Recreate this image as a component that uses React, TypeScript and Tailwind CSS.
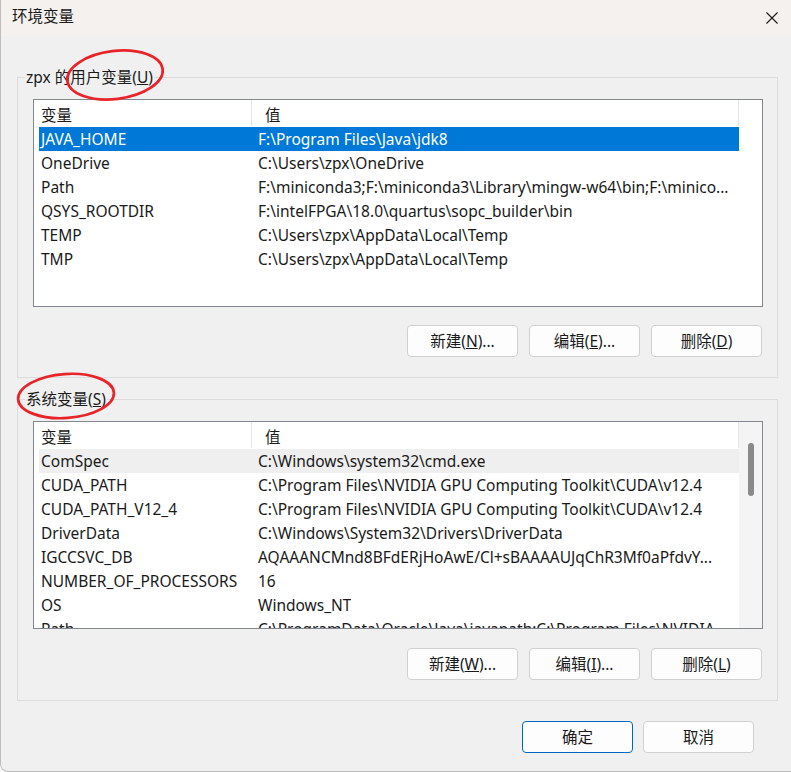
const font = "font-['Noto_Sans','Noto_Sans_CJK_SC',sans-serif]";

const userVars = [
  { name: "JAVA_HOME", value: "F:\\Program Files\\Java\\jdk8" },
  { name: "OneDrive", value: "C:\\Users\\zpx\\OneDrive" },
  { name: "Path", value: "F:\\miniconda3;F:\\miniconda3\\Library\\mingw-w64\\bin;F:\\minico..." },
  { name: "QSYS_ROOTDIR", value: "F:\\intelFPGA\\18.0\\quartus\\sopc_builder\\bin" },
  { name: "TEMP", value: "C:\\Users\\zpx\\AppData\\Local\\Temp" },
  { name: "TMP", value: "C:\\Users\\zpx\\AppData\\Local\\Temp" },
];

const systemVars = [
  { name: "ComSpec", value: "C:\\Windows\\system32\\cmd.exe" },
  { name: "CUDA_PATH", value: "C:\\Program Files\\NVIDIA GPU Computing Toolkit\\CUDA\\v12.4" },
  { name: "CUDA_PATH_V12_4", value: "C:\\Program Files\\NVIDIA GPU Computing Toolkit\\CUDA\\v12.4" },
  { name: "DriverData", value: "C:\\Windows\\System32\\Drivers\\DriverData" },
  { name: "IGCCSVC_DB", value: "AQAAANCMnd8BFdERjHoAwE/Cl+sBAAAAUJqChR3Mf0aPfdvY..." },
  { name: "NUMBER_OF_PROCESSORS", value: "16" },
  { name: "OS", value: "Windows_NT" },
  { name: "Path", value: "C:\\ProgramData\\Oracle\\Java\\javapath;C:\\Program Files\\NVIDIA..." },
];

type Row = { name: string; value: string };

function ListView({ rows, selected, hovered, scroll }: { rows: Row[]; selected?: number; hovered?: number; scroll?: boolean }) {
  return (
    <div className="flex h-[208px] w-[730px] overflow-hidden border border-[#828790] bg-white">
      <div className="flex w-[705px] flex-col">
        <div className="relative flex h-[27px] shrink-0 items-center pt-[4px] text-[#1a1a1a]">
          <div className="w-[224px] pl-[7px]">变量</div>
          <div className="pl-[7px]">值</div>
          <div className="absolute left-[217px] top-0 h-[26px] w-px bg-[#e5e5e5]" />
          <div className="absolute left-[704px] top-0 h-[26px] w-px bg-[#e5e5e5]" />
        </div>
        {rows.map((r, i) => (
          <div
            key={r.name + i}
            className={
              "ml-[5px] flex h-[24px] w-[700px] shrink-0 items-center whitespace-nowrap pt-[2px] " +
              (i === selected
                ? "bg-[#0078d7] text-white"
                : i === hovered
                ? "bg-[#efefef] text-[#1a1a1a]"
                : "text-[#1a1a1a]")
            }
          >
            <div className="w-[217px] shrink-0 overflow-hidden pl-[2px]">{r.name}</div>
            <div className="overflow-hidden pl-[2px]">{r.value}</div>
          </div>
        ))}
      </div>
      {scroll ? (
        <div className="ml-auto flex w-[23px] justify-center bg-[#f4f4f4] pt-[21px]">
          <div className="h-[53px] w-[6px] rounded-[3px] bg-[#8a8a8a]" />
        </div>
      ) : null}
    </div>
  );
}

function Button({ children, primary }: { children: React.ReactNode; primary?: boolean }) {
  return (
    <button
      className={
        "flex h-[32px] w-[111px] items-center justify-center rounded-[4px] bg-[#fdfdfd] pt-px text-[#1a1a1a] " +
        (primary ? "border border-[#0067c0]" : "border border-[#d0d0d0]")
      }
    >
      {children}
    </button>
  );
}

function GroupBox({ label, children, className }: { label: React.ReactNode; children: React.ReactNode; className?: string }) {
  return (
    <fieldset className={"ml-[16px] w-[761px] border border-[#dcdcdc] pb-[20px] pl-[15px] pr-[14px] pt-[12px] " + (className ?? "")}>
      <legend className="-ml-[8px] h-[20px] px-[1px] leading-[20px] text-[#1a1a1a]">{label}</legend>
      {children}
    </fieldset>
  );
}

export default function App() {
  return (
    <div className={"relative h-[772px] w-[791px] overflow-hidden rounded-bl-[8px] border-b border-l border-[#bdbdbd] bg-[#f0f0f0] text-[15.5px] " + font}>
      <div className="flex h-[36px] items-center justify-between bg-[#f4f1ee] pb-[3px] pl-[11px] pr-[13px]">
        <span className="text-[15.5px] text-[#1a1a1a]">环境变量</span>
        <svg width="12" height="12" viewBox="0 0 12 12" className="mt-[2px]">
          <path d="M0.5 0.5 L11.5 11.5 M11.5 0.5 L0.5 11.5" stroke="#1a1a1a" strokeWidth="1.1" fill="none" />
        </svg>
      </div>

      <div className="mt-[31px] flex flex-col">
        <GroupBox
          label={
            <>
              zpx 的用户变量(<span className="underline">U</span>)
            </>
          }
        >
          <ListView rows={userVars} selected={0} />
          <div className="mt-[18px] flex justify-end gap-[11px] pr-px">
            <Button>
              新建(<span className="underline">N</span>)...
            </Button>
            <Button>
              编辑(<span className="underline">E</span>)...
            </Button>
            <Button>
              删除(<span className="underline">D</span>)
            </Button>
          </div>
        </GroupBox>

        <GroupBox
          className="mt-[11px]"
          label={
            <>
              系统变量(<span className="underline">S</span>)
            </>
          }
        >
          <ListView rows={systemVars} hovered={0} scroll />
          <div className="mt-[19px] flex justify-end gap-[11px] pr-px">
            <Button>
              新建(<span className="underline">W</span>)...
            </Button>
            <Button>
              编辑(<span className="underline">I</span>)...
            </Button>
            <Button>
              删除(<span className="underline">L</span>)
            </Button>
          </div>
        </GroupBox>

        <div className="mt-[20px] flex justify-end gap-[10px] pr-[37px]">
          <Button primary>确定</Button>
          <Button>取消</Button>
        </div>
      </div>

      <svg className="pointer-events-none absolute left-0 top-0" width="791" height="772">
        <ellipse cx="114" cy="75" rx="48" ry="24" fill="none" stroke="#e8242a" strokeWidth="2.7" transform="rotate(-7 114 75)" />
        <ellipse cx="65" cy="396" rx="48" ry="22" fill="none" stroke="#e8242a" strokeWidth="2.7" transform="rotate(-4 65 396)" />
      </svg>
    </div>
  );
}
